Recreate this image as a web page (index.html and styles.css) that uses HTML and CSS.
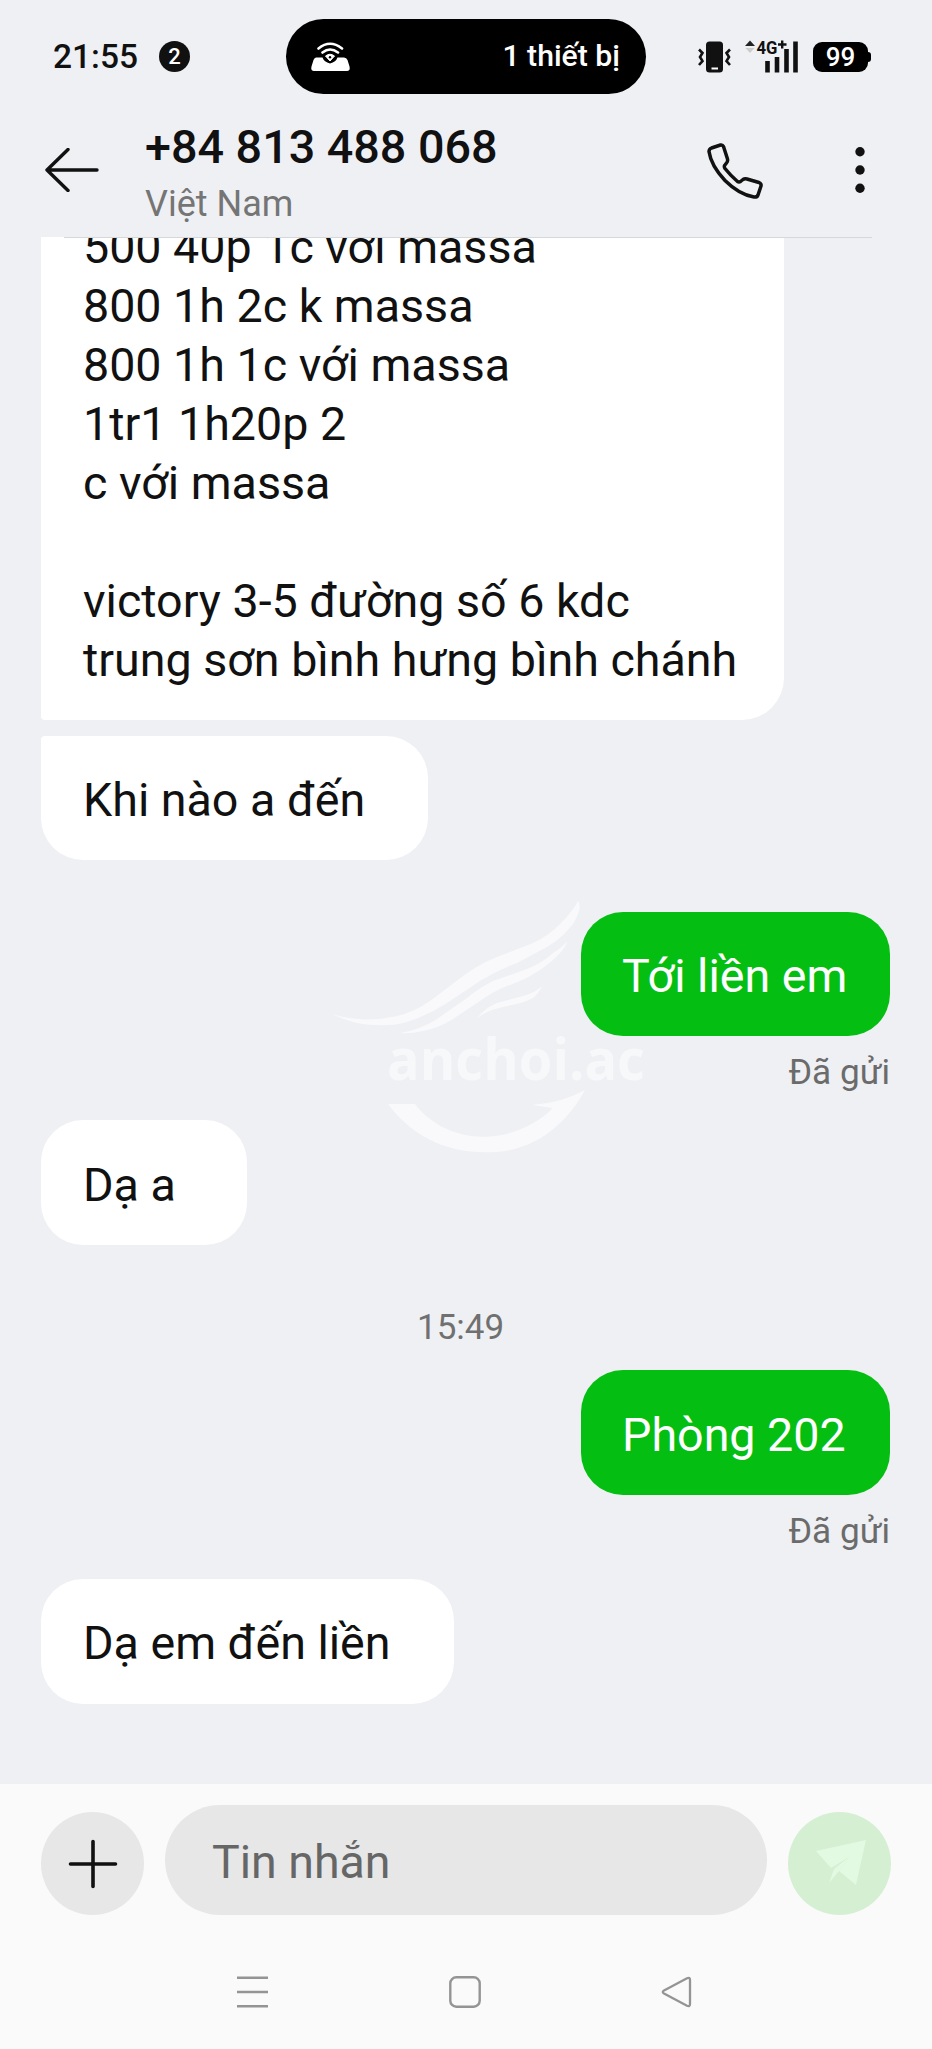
FILE: index.html
```html
<!DOCTYPE html>
<html lang="vi">
<head>
<meta charset="utf-8">
<title>+84 813 488 068</title>
<link rel="stylesheet" href="styles.css">
</head>
<body>
<div class="phone">
  <div class="status-bar">
    <span class="clock">21:55</span>
    <span class="count">2</span>
    <div class="island">
      <svg class="hotspot" width="40" height="30" viewBox="0 0 40 30">
        <path d="M5 15.500H11.500Q13 20 19 21.500Q25 20 26.500 15.500H33Q35.500 15.500 36.500 18L38.500 24.500Q39.500 29 36 29H3Q-0.500 29 0.500 24.500L2.500 18Q3.500 15.500 5 15.500Z" fill="#fff"/>
        <path d="M14.500 14Q19 10.500 23.500 14L19 19Z" fill="#fff" stroke="#fff" stroke-linejoin="round"/>
        <circle cx="19" cy="15.200" r="1.200" fill="#000"/>
        <path d="M7.500 6.500Q19 -3 31 6.500M11.500 10.500Q19 4.500 27 10.500" fill="none" stroke="#fff" stroke-width="2.600" stroke-linecap="round"/>
      </svg>
      <span class="island-text">1 thiết bị</span>
    </div>
    <svg class="vibrate" width="34" height="32" viewBox="0 0 34 32">
      <rect x="8" y="0.500" width="17" height="31" rx="3.500" fill="#111"/>
      <rect x="13.500" y="26.500" width="6.500" height="2" fill="#fff"/>
      <path d="M1 8.500L4.500 12L2 16L4.500 20L1 24M32 8.500L28.500 12L31 16L28.500 20L32 24" fill="none" stroke="#111" stroke-width="2.600"/>
    </svg>
    <svg class="signal" width="54" height="33" viewBox="0 0 54 33">
      <path d="M0 6L5 0.500L10 6Z" fill="#222"/>
      <path d="M0.500 8H9.500L5 13Z" fill="#ccc"/>
      <text class="net" x="11.500" y="14" textLength="21" lengthAdjust="spacingAndGlyphs">4G</text>
      <path d="M33 4.500H41.500M37.200 0.500V8.500" stroke="#111" stroke-width="2.400"/>
      <path d="M22.500 21V32.500M32 17V32.500M41.500 9V32.500M50.500 1.500V32.500" stroke="#111" stroke-width="4.600"/>
    </svg>
    <div class="battery">99</div>
  </div>

  <header class="topbar">
    <svg class="back" width="54" height="44" viewBox="0 0 54 44">
      <path d="M52 22H2M23 1.500L2 22L23 42.500" fill="none" stroke="#111" stroke-width="3.400" stroke-linecap="round" stroke-linejoin="round"/>
    </svg>
    <div class="contact">
      <div class="number">+84 813 488 068</div>
      <div class="country">Việt Nam</div>
    </div>
    <svg class="call" width="56" height="56" viewBox="0 0 56 56">
      <path d="M4.500 5L13.500 2Q15.500 1.500 16.500 3.500L20.500 16Q21 18.500 19.500 20L17.500 22.500Q17 24 18 25.500Q23.500 32.500 30.500 38.500Q32 39.500 33.500 38.500L36 36.500Q37.500 35.500 40 36L52 39.500Q54.500 40.500 54 43L51 52Q50 54.500 47 54Q32 51.500 18 37.500Q4 22.500 2 8.500Q2 6 4.500 5Z" fill="none" stroke="#111" stroke-width="3.500" stroke-linejoin="round"/>
    </svg>
    <svg class="more" width="10" height="46" viewBox="0 0 10 46">
      <circle cx="5" cy="4.700" r="4.700" fill="#111"/><circle cx="5" cy="23" r="4.700" fill="#111"/><circle cx="5" cy="41.300" r="4.700" fill="#111"/>
    </svg>
  </header>

  <main class="chat">
    <div class="bubble received long">500 40p 1c với massa
800 1h 2c k massa
800 1h 1c với massa
1tr1 1h20p 2
c với massa

victory 3-5 đường số 6 kdc
trung sơn bình hưng bình chánh</div>
    <div class="bubble received arrive">Khi nào a đến</div>
    <div class="bubble sent">Tới liền em</div>
    <div class="state">Đã gửi</div>
    <div class="bubble received yes">Dạ a</div>
    <div class="time">15:49</div>
    <div class="bubble sent room">Phòng 202</div>
    <div class="state">Đã gửi</div>
    <div class="bubble received coming">Dạ em đến liền</div>
    <svg class="watermark" width="320" height="270" viewBox="0 -2 320 270">
      <g class="mark">
        <path d="M2 112Q17 117 33 117.500Q50 118 67 114Q84 110 100 99L133 74Q149 62 167 55L203 41Q220 33 230 22Q243 9 248 -1Q251 4 249 9Q246 20 237 29Q229 38 217 45L187 61Q168 68 150 79L117 101Q100 112 83 118Q70 123 57 123Q39 124 23 120Q12 117 2 112Z"/>
        <path d="M70 131Q90 128 107 117L137 96Q149 86 163 79L197 67Q212 61 223 51Q233 45 237 39Q236 45 230 51Q222 60 210 68Q195 78 177 84Q162 90 150 99L123 117Q109 126 93 129Q81 132 70 131Z"/>
        <path d="M147 116Q155 106 167 101L193 94Q205 91 212 84Q209 91 203 96Q191 102 177 104Q160 107 147 116Z"/>
        <path d="M58 202H85C118 244 180 245 221 208L222 206L202 203Q231 201 255 188C240 216 211 247 166 250C117 253 82 234 58 202Z"/>
      </g>
      <text class="brand" x="57" y="178" textLength="258" lengthAdjust="spacingAndGlyphs">anchoi.ac</text>
    </svg>
  </main>

  <footer class="composer">
    <div class="add">
      <svg width="50" height="50" viewBox="0 0 50 50"><path d="M25 2.500V47.500M2.500 25H47.500" stroke="#111" stroke-width="3.600" stroke-linecap="round"/></svg>
    </div>
    <div class="field">Tin nhắn</div>
    <div class="send">
      <svg width="52" height="46" viewBox="0 0 52 46">
        <path d="M1 11L51 0L41 45L24 31L34 17L16 28Z" fill="#e2fae1"/>
        <path d="M19 29L34 17L24 31L14 43Z" fill="#e2fae1"/>
      </svg>
    </div>
  </footer>

  <nav class="system-nav">
    <svg width="32" height="32" viewBox="0 0 32 32"><path d="M0 1.700H31M0 16H31M0 30.300H31" stroke="#949494" stroke-width="2.600"/></svg>
    <svg width="32" height="32" viewBox="0 0 32 32"><rect x="1.300" y="1.300" width="29.400" height="29.400" rx="6" fill="none" stroke="#949494" stroke-width="2.400"/></svg>
    <svg width="32" height="32" viewBox="0 0 32 32"><path d="M3 14.500L26 2.300Q29 1 29 4V28Q29 31 26 29.700L3 17.500Q0.500 16 3 14.500Z" fill="none" stroke="#949494" stroke-width="2.300"/></svg>
  </nav>
</div>
</body>
</html>
```

FILE: styles.css
```css
* { box-sizing: border-box; }
body { margin: 0; font-family: Roboto, "Noto Sans", sans-serif; color: #111; }
svg { display: block; flex: none; }
.phone { width: 932px; height: 2049px; background: #eff0f4; display: flex; flex-direction: column; overflow: hidden; }

.status-bar { height: 113px; flex: none; display: flex; align-items: center; padding: 0 0 0 53px; }
.clock { width: 106px; padding-bottom: 1px; font-size: 33.500px; font-weight: 500; white-space: nowrap; }
.count { width: 31px; height: 31px; border-radius: 50%; background: #111; color: #fff; font-size: 22px; font-weight: 500; line-height: 31px; text-align: center; }
.island { width: 360px; height: 75px; margin-left: 96px; border-radius: 38px; background: #000; color: #fff; display: flex; align-items: center; justify-content: space-between; padding: 0 26px 0 25px; }
.island-text { padding-bottom: 2px; font-size: 30.200px; font-weight: 500; }
.vibrate { margin-left: 52px; }
.signal { margin-left: 13px; overflow: visible; }
.net { font-family: Roboto, sans-serif; font-size: 19px; font-weight: 700; fill: #111; }
.battery { position: relative; width: 55px; height: 30px; margin-left: 14px; border-radius: 9px; background: #000; color: #fff; font-size: 26px; font-weight: 500; line-height: 31px; text-align: center; }
.battery::after { content: ""; position: absolute; right: -3px; top: 10px; width: 4px; height: 10px; border-radius: 0 3px 3px 0; background: #000; }

.topbar { height: 124px; flex: none; display: flex; align-items: flex-start; padding-left: 45px; }
.back { margin-top: 35px; }
.contact { width: 560px; margin-left: 46px; padding-top: 6px; white-space: nowrap; }
.number { font-size: 46.700px; font-weight: 500; line-height: 56px; }
.country { font-size: 36px; line-height: 44px; margin-top: 7px; color: #757575; }
.call { margin-left: 2px; margin-top: 30px; }
.more { margin-left: 92px; margin-top: 34px; }

.chat { position: relative; height: 1547px; flex: none; overflow: hidden; display: flex; flex-direction: column; padding: 0 42px 0 41px; }
.chat::before { content: ""; position: absolute; left: 64px; right: 60px; top: 0; height: 1px; background: #d5d7da; }
.bubble { flex: none; height: 124px; padding: 35px 42px 0; border-radius: 42px; font-size: 46.600px; line-height: 59px; white-space: pre; }
.received { align-self: flex-start; background: #fff; }
.long { width: 743px; height: 502px; margin-top: -19px; padding-top: 0; border-radius: 0 0 42px 4px; }
.arrive { width: 387px; margin-top: 16px; border-top-left-radius: 4px; }
.sent { align-self: flex-end; width: 309px; margin-top: 52px; padding-left: 41px; background: #05be12; color: #fff; }
.state { flex: none; align-self: flex-end; height: 40px; margin-top: 16px; font-size: 35.200px; line-height: 40px; color: #6b6b6b; }
.yes { width: 206px; height: 125px; margin-top: 28px; padding-top: 36px; }
.time { flex: none; align-self: flex-start; margin: 63px 0 0 376px; height: 40px; font-size: 35px; line-height: 40px; color: #707070; }
.room { height: 125px; margin-top: 22px; padding-top: 36px; }
.coming { width: 413px; height: 125px; margin-top: 28px; }
.watermark { position: absolute; left: 330px; top: 663px; overflow: visible; }
.mark { fill: #fff; fill-opacity: 0.600; }
.brand { font-family: "Open Sans", "Noto Sans", sans-serif; font-size: 58px; font-weight: 700; fill: #fff; fill-opacity: 0.520; }

.composer { height: 152px; flex: none; background: #fafafa; display: flex; align-items: flex-start; padding: 21px 41px 0 41px; }
.add, .send { width: 103px; height: 103px; margin-top: 7px; border-radius: 50%; display: flex; align-items: center; justify-content: center; background: #e7e7e7; }
.send { background: #d5efd3; margin-left: 21px; padding-left: 2px; padding-bottom: 2px; }
.field { width: 602px; height: 110px; margin-left: 21px; padding-left: 47px; border-radius: 55px; background: #e7e7e7; color: #666; font-size: 46.500px; line-height: 114px; }
.system-nav { flex: 1; background: #fafafa; display: flex; gap: 180px; padding: 40px 0 0 237px; }
```
